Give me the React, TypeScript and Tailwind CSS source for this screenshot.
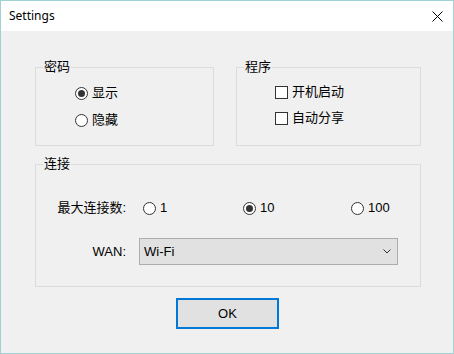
import React from "react";

const ui = { fontFamily: '"Liberation Sans", "Noto Sans CJK SC", sans-serif' };

function Radio(props: { label: string; checked?: boolean; className?: string }) {
  return (
    <div className={"flex items-center h-4 gap-1 " + (props.className ?? "")}>
      <span className="w-[13px] h-[13px] rounded-full border border-[#333] bg-white flex items-center justify-center shrink-0">
        {props.checked && <span className="w-[7px] h-[7px] rounded-full bg-[#333]" />}
      </span>
      <span className="text-[13px] leading-4 text-black">{props.label}</span>
    </div>
  );
}

function Check(props: { label: string }) {
  return (
    <div className="flex items-center h-4 gap-1">
      <span className="w-[13px] h-[13px] border border-[#333] bg-white shrink-0" />
      <span className="text-[13px] leading-4 text-black">{props.label}</span>
    </div>
  );
}

export default function App() {
  return (
    <div className="w-[454px] h-[354px] border border-[#9fd2d2] flex flex-col bg-[#f0f0f0]" style={ui}>
      {/* title bar */}
      <div className="h-[30px] bg-white flex items-center justify-between pl-2 pr-[10px] shrink-0">
        <span className="text-[12px] text-black" style={{ fontFamily: '"Noto Sans", sans-serif' }}>Settings</span>
        <svg width="11" height="11" viewBox="0 0 11 11" className="mt-[1px]">
          <path d="M0.5 0.5L10.5 10.5M10.5 0.5L0.5 10.5" stroke="#000" strokeWidth="1" />
        </svg>
      </div>

      <div className="flex-1 pl-[34px] pr-[32px] pt-[29px]">
        <div className="flex gap-[22px]">
          <fieldset className="w-[179px] border border-[#dcdcdc]">
            <legend className="ml-[7px] px-[1px] text-[13px] leading-[14px]">密码</legend>
            <div className="flex flex-col gap-[11px] pl-[39px] pt-[11px] pb-[17px]">
              <Radio label="显示" checked />
              <Radio label="隐藏" />
            </div>
          </fieldset>
          <fieldset className="w-[185px] border border-[#dcdcdc]">
            <legend className="ml-[7px] px-[1px] text-[13px] leading-[14px]">程序</legend>
            <div className="flex flex-col gap-[10px] pl-[38px] pt-[10px] pb-[19px]">
              <Check label="开机启动" />
              <Check label="自动分享" />
            </div>
          </fieldset>
        </div>

        <fieldset className="mt-[11px] w-[386px] border border-[#dcdcdc]">
          <legend className="ml-[7px] px-[1px] text-[13px] leading-[14px]">连接</legend>
          <div className="pt-[29px] pb-[21px]">
            <div className="flex items-center h-4">
              <span className="w-[90px] text-right text-[13px] leading-4">最大连接数:</span>
              <Radio label="1" className="ml-[17px] w-[100px]" />
              <Radio label="10" checked className="w-[108px]" />
              <Radio label="100" />
            </div>
            <div className="flex items-center mt-[22px]">
              <span className="w-[90px] text-right text-[13px] leading-4">WAN:</span>
              <div className="ml-[13px] w-[259px] h-[27px] border border-[#adadad] bg-[#e1e1e1] flex items-center justify-between pl-[4px] pr-[6px]">
                <span className="text-[13px]">Wi-Fi</span>
                <svg width="8" height="5" viewBox="0 0 8 5">
                  <path d="M0.5 0.5L4 4L7.5 0.5" stroke="#333" strokeWidth="1" fill="none" />
                </svg>
              </div>
            </div>
          </div>
        </fieldset>

        <div className="flex justify-center mt-[11px] pr-[1px]">
          <button className="w-[103px] h-[31px] border-2 border-[#0078d7] bg-[#e1e1e1] text-[13px] text-black">OK</button>
        </div>
      </div>
    </div>
  );
}
